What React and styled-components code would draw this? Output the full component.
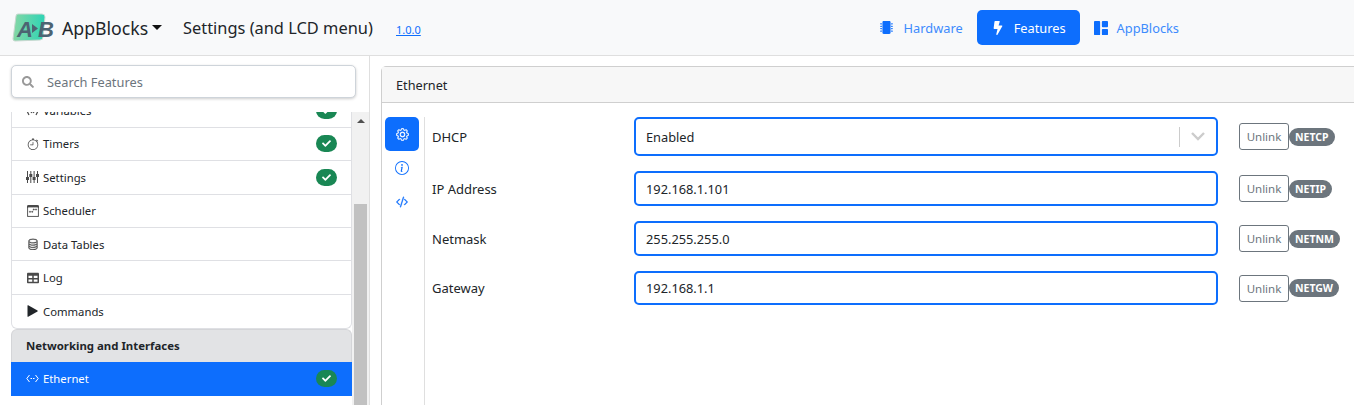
import React from "react";
import styled, { createGlobalStyle } from "styled-components";
import {
  BsGear,
  BsInfoCircle,
  BsCodeSlash,
  BsStopwatch,
  BsDatabase,
  BsGrid1X2Fill,
  BsCalendar3Week,
} from "react-icons/bs";
import { FaBolt, FaMicrochip, FaSearch, FaCheck, FaTable } from "react-icons/fa";

const FONT = '"Noto Sans", "Open Sans", sans-serif';

const GlobalStyle = createGlobalStyle`
  html, body {
    margin: 0;
    height: 405px;
    overflow: hidden;
    background: #fff;
    font-family: ${FONT};
    color: #212529;
  }
  * { box-sizing: border-box; }
`;

const Page = styled.div`
  display: flex;
  flex-direction: column;
  height: 405px;
`;

const Navbar = styled.header`
  display: flex;
  align-items: center;
  height: 56px;
  flex: none;
  padding-left: 12px;
  background: #f8f9fa;
  border-bottom: 1px solid #dfdfdf;
`;

const Brand = styled.div`
  display: flex;
  align-items: center;
  font-size: 17.7px;
  width: 121px;
  margin-left: 8px;
`;

const Caret = styled.span`
  width: 0;
  height: 0;
  margin-left: 4px;
  border-left: 5px solid transparent;
  border-right: 5px solid transparent;
  border-top: 5px solid #111;
`;

const PageTitle = styled.div`
  font-size: 16.4px;
  width: 213px;
`;

const Version = styled.a`
  font-size: 11px;
  color: #0d6efd;
  text-decoration: underline;
  margin-top: 3px;
`;

const NavTabs = styled.nav`
  display: flex;
  align-items: center;
  margin-left: auto;
  margin-right: 161px;
  height: 35px;
`;

const NavTab = styled.a`
  display: flex;
  align-items: center;
  gap: ${(props) => props.$gap}px;
  height: 35px;
  padding: 0 14px;
  font-size: 12.8px;
  border-radius: 5px;
  color: ${(props) => (props.$active ? "#fff" : "#3d8bfd")};
  background: ${(props) => (props.$active ? "#0d6efd" : "transparent")};
  svg {
    color: ${(props) => (props.$active ? "#fff" : "#0d6efd")};
  }
`;

const Body = styled.div`
  display: flex;
  flex: 1;
  min-height: 0;
`;

const Sidebar = styled.aside`
  display: flex;
  flex-direction: column;
  flex: none;
  width: 370px;
  padding: 9px 0 0 11px;
  border-right: 1px solid #dfdfdf;
`;

const SearchBox = styled.div`
  display: flex;
  align-items: center;
  flex: none;
  width: 345px;
  height: 33px;
  padding-left: 10px;
  gap: 13px;
  font-size: 12.8px;
  color: #6c757d;
  background: #fff;
  border: 1px solid #ced4da;
  border-radius: 5px;
  box-shadow: 0 1px 3px rgba(0, 0, 0, 0.2);
  svg {
    color: #999;
  }
`;

const SideScroll = styled.div`
  display: flex;
  flex: 1;
  min-height: 0;
  margin-top: 14px;
  overflow: hidden;
`;

const SideList = styled.div`
  width: 341px;
  flex: none;
  margin-top: -17.6px;
`;

const SideGroup = styled.div`
  background: #fff;
  border: 1px solid #dfe0e4;
  border-top: none;
  border-radius: 0 0 6px 6px;
`;

const SideItem = styled.div`
  display: flex;
  align-items: center;
  height: 33.4px;
  padding: 0 14px;
  font-size: 11.3px;
  border-bottom: ${(props) => (props.$last ? "none" : "1px solid #dfe0e4")};
`;

const GlyphSlot = styled.span`
  display: flex;
  align-items: center;
  justify-content: center;
  flex: none;
  width: 13px;
  height: 13px;
  margin-right: 4px;
  color: ${(props) => (props.$light ? "#fff" : "#4a4a4a")};
  svg {
    stroke-width: ${(props) => (props.$bold ? 0.4 : "")};
    stroke: ${(props) => (props.$bold ? "currentColor" : "")};
  }
`;

const Check = styled.span`
  display: flex;
  align-items: center;
  justify-content: center;
  width: 21px;
  height: 17px;
  margin-left: auto;
  color: #fff;
  font-size: 9px;
  background: #198754;
  border-radius: 9px;
`;

const GroupHead = styled.div`
  display: flex;
  align-items: center;
  height: 33px;
  margin-top: -0.6px;
  padding-left: 14px;
  font-size: 11.4px;
  font-weight: 700;
  background: #e2e3e5;
  border: 1px solid #d4d5d8;
  border-bottom: none;
  border-radius: 6px 6px 0 0;
`;

const ActiveItem = styled(SideItem)`
  height: 34px;
  padding: 0 15px;
  color: #fff;
  background: #0d6efd;
  border-bottom: none;
`;

const ScrollTrack = styled.div`
  display: flex;
  flex-direction: column;
  align-items: center;
  flex: none;
  width: 17px;
  background: #f1f1f1;
`;

const ScrollArrow = styled.span`
  width: 0;
  height: 0;
  margin-top: 7px;
  border-left: 4px solid transparent;
  border-right: 4px solid transparent;
  border-bottom: 4px solid #505050;
`;

const ScrollThumb = styled.div`
  flex: 1;
  width: 13px;
  margin-top: 81px;
  background: #c1c1c1;
`;

const Main = styled.main`
  flex: 1;
  min-width: 0;
  padding: 10px 0 0 11px;
  overflow: hidden;
`;

const Card = styled.section`
  width: 1000px;
  height: 360px;
  background: #fff;
  border: 1px solid #cfcfcf;
  border-radius: 5px 0 0 0;
`;

const CardHead = styled.div`
  display: flex;
  align-items: center;
  height: 36px;
  padding: 1px 0 0 14px;
  font-size: 12.7px;
  background: #f7f7f7;
  border-bottom: 1px solid #cfcfcf;
`;

const CardBody = styled.div`
  display: flex;
  height: 320px;
  padding-top: 14px;
`;

const Rail = styled.div`
  display: flex;
  flex-direction: column;
  flex: none;
  width: 43px;
  padding-left: 3px;
  border-right: 1px solid #dfdfdf;
`;

const RailTab = styled.div`
  display: flex;
  align-items: center;
  justify-content: center;
  width: 34px;
  height: 34px;
  font-size: ${(props) => props.$size}px;
  border-radius: 5px;
  color: ${(props) => (props.$active ? "#fff" : "#0d6efd")};
  background: ${(props) => (props.$active ? "#0d6efd" : "transparent")};
  svg {
    stroke: currentColor;
    stroke-width: ${(props) => props.$weight};
  }
`;

const Form = styled.div`
  display: flex;
  flex-direction: column;
  flex: none;
  width: 904px;
  padding-left: 7px;
`;

const Row = styled.div`
  display: flex;
  align-items: center;
  height: ${(props) => props.$height}px;
  margin-bottom: 15px;
`;

const Label = styled.label`
  width: 202px;
  flex: none;
  font-size: 13px;
`;

const Field = styled.div`
  display: flex;
  align-items: center;
  flex: none;
  width: 584px;
  height: 100%;
  padding-left: 10px;
  font-size: 12.8px;
  background: #fff;
  border: 2px solid #0d6efd;
  border-radius: 5px;
`;

const SelectTail = styled.div`
  display: flex;
  align-items: center;
  margin-left: auto;
  height: 20px;
  padding-right: 11px;
  gap: 11px;
  color: #ccc;
  &::before {
    content: "";
    width: 1px;
    height: 20px;
    background: #ccc;
  }
`;

const Unlink = styled.button`
  flex: none;
  width: 50px;
  height: 27px;
  margin-left: 21px;
  padding: 0;
  font: 11.5px ${FONT};
  color: #6c757d;
  background: #fff;
  border: 1px solid #6c757d;
  border-radius: 3px;
`;

const Badge = styled.span`
  display: inline-block;
  padding: 2px 6px;
  font-size: 10.5px;
  font-weight: 700;
  line-height: 14px;
  color: #fff;
  background: #6c757d;
  border-radius: 9px;
`;

const Logo = () => (
  <svg width="42" height="30" viewBox="0 0 42 30">
    <defs>
      <linearGradient id="logoFill" x1="0" y1="0" x2="1" y2="0">
        <stop offset="0" stopColor="#86d7a5" />
        <stop offset="1" stopColor="#2dd4b5" />
      </linearGradient>
    </defs>
    <path
      d="M6 1 H30 Q33 1 33 4 L31 24 Q31 27 28 27 L3 28 Q1 28 1 26 L4 3 Q4 1 6 1 Z"
      fill="url(#logoFill)"
      stroke="#c8d8d0"
    />
    <text x="5" y="23.5" fontFamily="Liberation Sans" fontStyle="italic" fontWeight="700" fontSize="22" fill="#4c6472">
      A
    </text>
    <path d="M20 11 L26 15.5 L20 20 Z" fill="#4c6472" />
    <text x="26" y="23.5" fontFamily="Liberation Sans" fontStyle="italic" fontWeight="700" fontSize="22" fill="#4c6472">
      B
    </text>
  </svg>
);

const SlidersIcon = () => (
  <svg width="13" height="12" viewBox="0 0 13 12" fill="currentColor">
    <rect x="1" y="0" width="1" height="12" />
    <rect x="4.3" y="0" width="1" height="12" />
    <rect x="7.6" y="0" width="1" height="12" />
    <rect x="11" y="0" width="1" height="12" />
    <rect x="0" y="6" width="3" height="3" />
    <rect x="3.3" y="3" width="3" height="3" />
    <rect x="6.6" y="6" width="3" height="3" />
    <rect x="10" y="3" width="3" height="3" />
  </svg>
);

const LinkIcon = () => (
  <svg width="13" height="9" viewBox="0 0 13 9" fill="none" stroke="currentColor" strokeWidth="1">
    <path d="M3.5 1 L0.8 4.5 L3.5 8" />
    <path d="M9.5 1 L12.2 4.5 L9.5 8" />
    <path d="M4.5 4.5 H8.5" strokeDasharray="1.5 1" />
  </svg>
);

const VariablesIcon = () => (
  <svg width="13" height="10" viewBox="0 0 13 10" fill="none" stroke="currentColor" strokeWidth="1.2">
    <path d="M3 1 L1 5 L3 9" />
    <path d="M10 1 L12 5 L10 9" />
    <path d="M5 3 L8 7 M8 3 L5 7" />
  </svg>
);

const PlayIcon = () => (
  <svg width="11" height="12" viewBox="0 0 11 12" fill="#212529">
    <path d="M0.5 0.6 Q0.5 0 1.2 0.3 L10.5 5.5 Q11 6 10.5 6.5 L1.2 11.7 Q0.5 12 0.5 11.4 Z" />
  </svg>
);

const App = () => {
  const fields = [
    { label: "IP Address", value: "192.168.1.101", badge: "NETIP", height: 35 },
    { label: "Netmask", value: "255.255.255.0", badge: "NETNM", height: 35 },
    { label: "Gateway", value: "192.168.1.1", badge: "NETGW", height: 34 },
  ];
  return (
    <Page>
      <GlobalStyle />
      <Navbar>
        <Logo />
        <Brand>
          AppBlocks
          <Caret />
        </Brand>
        <PageTitle>Settings (and LCD menu)</PageTitle>
        <Version>1.0.0</Version>
        <NavTabs>
          <NavTab $gap={11}>
            <FaMicrochip size={13} />
            Hardware
          </NavTab>
          <NavTab $active $gap={9}>
            <FaBolt size={14} />
            Features
          </NavTab>
          <NavTab $gap={9}>
            <BsGrid1X2Fill size={14} />
            AppBlocks
          </NavTab>
        </NavTabs>
      </Navbar>
      <Body>
        <Sidebar>
          <SearchBox>
            <FaSearch size={12} />
            Search Features
          </SearchBox>
          <SideScroll>
            <SideList>
              <SideGroup>
                <SideItem>
                  <GlyphSlot>
                    <VariablesIcon />
                  </GlyphSlot>
                  Variables
                  <Check>
                    <FaCheck />
                  </Check>
                </SideItem>
                <SideItem>
                  <GlyphSlot>
                    <BsStopwatch size={12} />
                  </GlyphSlot>
                  Timers
                  <Check>
                    <FaCheck />
                  </Check>
                </SideItem>
                <SideItem>
                  <GlyphSlot>
                    <SlidersIcon />
                  </GlyphSlot>
                  Settings
                  <Check>
                    <FaCheck />
                  </Check>
                </SideItem>
                <SideItem>
                  <GlyphSlot $bold>
                    <BsCalendar3Week size={12} />
                  </GlyphSlot>
                  Scheduler
                </SideItem>
                <SideItem>
                  <GlyphSlot $bold>
                    <BsDatabase size={12} />
                  </GlyphSlot>
                  Data Tables
                </SideItem>
                <SideItem>
                  <GlyphSlot>
                    <FaTable size={12} />
                  </GlyphSlot>
                  Log
                </SideItem>
                <SideItem $last>
                  <GlyphSlot>
                    <PlayIcon />
                  </GlyphSlot>
                  Commands
                </SideItem>
              </SideGroup>
              <GroupHead>Networking and Interfaces</GroupHead>
              <ActiveItem>
                <GlyphSlot $light>
                  <LinkIcon />
                </GlyphSlot>
                Ethernet
                <Check>
                  <FaCheck />
                </Check>
              </ActiveItem>
            </SideList>
            <ScrollTrack>
              <ScrollArrow />
              <ScrollThumb />
            </ScrollTrack>
          </SideScroll>
        </Sidebar>
        <Main>
          <Card>
            <CardHead>Ethernet</CardHead>
            <CardBody>
              <Rail>
                <RailTab $active $size={13} $weight={0.4}>
                  <BsGear />
                </RailTab>
                <RailTab $size={14} $weight={0}>
                  <BsInfoCircle />
                </RailTab>
                <RailTab $size={12} $weight={0.6}>
                  <BsCodeSlash />
                </RailTab>
              </Rail>
              <Form>
                <Row $height={39}>
                  <Label>DHCP</Label>
                  <Field>
                    Enabled
                    <SelectTail>
                      <svg width="14" height="9" viewBox="0 0 14 9" fill="none" stroke="#ccc" strokeWidth="2.4">
                        <path d="M1 1 L7 7 L13 1" />
                      </svg>
                    </SelectTail>
                  </Field>
                  <Unlink>Unlink</Unlink>
                  <Badge>NETCP</Badge>
                </Row>
                {fields.map((field) => (
                  <Row key={field.badge} $height={field.height}>
                    <Label>{field.label}</Label>
                    <Field>{field.value}</Field>
                    <Unlink>Unlink</Unlink>
                    <Badge>{field.badge}</Badge>
                  </Row>
                ))}
              </Form>
            </CardBody>
          </Card>
        </Main>
      </Body>
    </Page>
  );
};

export default App;
